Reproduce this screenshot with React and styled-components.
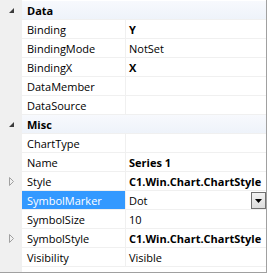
import React from "react";
import styled, { createGlobalStyle } from "styled-components";

const Global = createGlobalStyle`
  html, body { margin: 0; padding: 0; background: #fff; }
  body { font-family: "Segoe UI", "Open Sans", "Noto Sans", sans-serif; }
`;

const Frame = styled.div`
  width: 269px;
  height: 274px;
  background: #fff;
  box-sizing: border-box;
  padding: 0 2px 1px 0;
`;

const Grid = styled.div`
  height: 100%;
  box-sizing: border-box;
  border-right: 1px solid #a0a0a0;
  border-bottom: 1px solid #a0a0a0;
  background: linear-gradient(to right, #f0f0f0 22px, #fff 22px);
  display: flex;
  flex-direction: column;
  padding-top: 1px;
  font-size: 11px;
  color: #000;
`;

const Row = styled.div`
  display: grid;
  grid-template-columns: 22px 104px 1fr;
  height: 19px;
  box-sizing: border-box;
`;

const Margin = styled.div`
  background: #f0f0f0;
  display: flex;
  align-items: center;
  justify-content: center;
  padding-left: 2px;
`;

const CategoryLabel = styled.div`
  grid-column: 2 / 4;
  background: linear-gradient(to bottom, #f7f9fd, #eef3fa);
  border-bottom: 1px solid #f0f0f0;
  font-weight: 700;
  padding-left: 5px;
  display: flex;
  align-items: center;
`;

const NameCell = styled.div`
  border-bottom: 1px solid #f0f0f0;
  border-right: 1px solid #f0f0f0;
  background: ${(p) => (p.$selected ? "#3399ff" : "transparent")};
  color: ${(p) => (p.$selected ? "#fff" : "#000")};
  padding-left: 5px;
  display: flex;
  align-items: center;
  white-space: nowrap;
  overflow: hidden;
`;

const ValueCell = styled.div`
  border-bottom: 1px solid #f0f0f0;
  padding-left: 3px;
  display: flex;
  align-items: center;
  justify-content: space-between;
  font-weight: ${(p) => (p.$bold ? 700 : 400)};
  white-space: nowrap;
  overflow: visible;
`;

const DropButton = styled.div`
  width: 15px;
  height: 17px;
  box-sizing: border-box;
  border: 1px solid #707070;
  background: linear-gradient(to bottom, #f2f2f2, #dcdcdc);
  display: flex;
  align-items: center;
  justify-content: center;
  margin-top: 1px;
`;

const Collapse = () => (
  <svg width="6" height="6" viewBox="0 0 6 6">
    <path d="M5 0 L5 5 L0 5 Z" fill="#3c3c3c" />
  </svg>
);

const Expand = () => (
  <svg width="6" height="9" viewBox="0 0 6 9">
    <path d="M0.5 0.5 L4.5 4.5 L0.5 8.5 Z" fill="none" stroke="#a0a0a0" />
  </svg>
);

const Arrow = () => (
  <svg width="7" height="4" viewBox="0 0 7 4">
    <path d="M0 0 L7 0 L3.5 4 Z" fill="#000" />
  </svg>
);

const data = [
  { cat: "Data" },
  { name: "Binding", value: "Y", bold: true },
  { name: "BindingMode", value: "NotSet" },
  { name: "BindingX", value: "X", bold: true },
  { name: "DataMember", value: "" },
  { name: "DataSource", value: "" },
  { cat: "Misc" },
  { name: "ChartType", value: "" },
  { name: "Name", value: "Series 1", bold: true },
  { name: "Style", value: "C1.Win.Chart.ChartStyle", bold: true, expand: true },
  { name: "SymbolMarker", value: "Dot", selected: true, drop: true },
  { name: "SymbolSize", value: "10" },
  { name: "SymbolStyle", value: "C1.Win.Chart.ChartStyle", bold: true, expand: true },
  { name: "Visibility", value: "Visible" },
];

export default function App() {
  return (
    <Frame>
      <Global />
      <Grid>
        {data.map((r, i) =>
          r.cat ? (
            <Row key={i}>
              <Margin>
                <Collapse />
              </Margin>
              <CategoryLabel>{r.cat}</CategoryLabel>
            </Row>
          ) : (
            <Row key={i}>
              <Margin>{r.expand ? <Expand /> : null}</Margin>
              <NameCell $selected={r.selected}>{r.name}</NameCell>
              <ValueCell $bold={r.bold}>
                <span>{r.value}</span>
                {r.drop ? (
                  <DropButton>
                    <Arrow />
                  </DropButton>
                ) : null}
              </ValueCell>
            </Row>
          )
        )}
      </Grid>
    </Frame>
  );
}
